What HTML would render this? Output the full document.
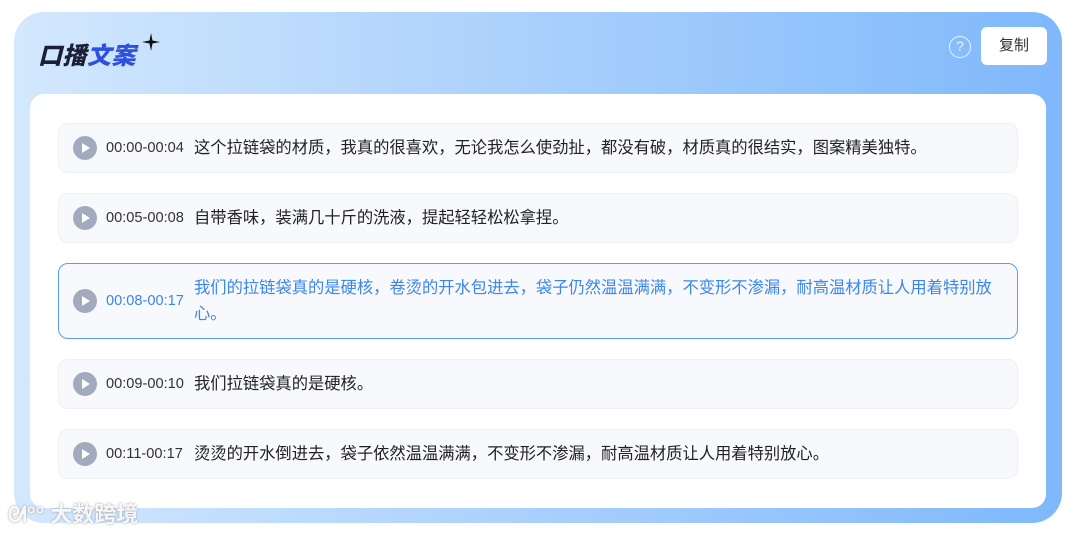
<!DOCTYPE html>
<html><head><meta charset="utf-8"><style>
*{margin:0;padding:0;box-sizing:border-box}
body{width:1080px;height:533px;background:#fff;font-family:"Liberation Sans","Noto Sans CJK SC",sans-serif;position:relative;overflow:hidden}
.outer{position:absolute;left:14px;top:12px;width:1048px;height:511px;border-radius:30px;background:linear-gradient(90deg,#d3e8fd 0%,#a9d0fc 50%,#7fb8fb 100%)}
.logo{position:absolute;left:38px;top:36px;font-size:24px;font-weight:900;font-style:italic;letter-spacing:0.5px;color:#2f4fe0}
.logo span{color:#1a1f36}
.star{position:absolute;left:142px;top:33px}
.help{position:absolute;left:949px;top:36px;width:22px;height:22px;border:1.5px solid #eaf3ff;border-radius:50%;color:#eaf3ff;font-size:14px;text-align:center;line-height:19px}
.copy{position:absolute;left:981px;top:27px;width:66px;height:38px;background:#fff;border-radius:6px;font-size:15px;color:#333;text-align:center;line-height:38px}
.panel{position:absolute;left:30px;top:94px;width:1016px;height:414px;background:#fff;border-radius:14px}
.row{position:absolute;left:58px;width:960px;background:#f8f9fc;border:1px solid #eef0f4;border-radius:10px;display:flex;align-items:center}
.play{position:absolute;left:14px;width:24px;height:24px;border-radius:50%;background:#a2aabd}
.play:after{content:"";position:absolute;left:9px;top:7px;border-left:8px solid #fff;border-top:5px solid transparent;border-bottom:5px solid transparent}
.t{position:absolute;left:47px;font-size:14.6px;color:#333}
.x{position:absolute;left:135px;right:12px;font-size:16.3px;color:#222;line-height:26px}
.act{border:1px solid #5b9bef;background:#f8f9fd}
.act .t,.act .x{color:#3a86ee}
.wm{position:absolute;left:8px;top:497px;font-size:22px;color:rgba(255,255,255,.9);text-shadow:0 0 2px #999;font-weight:bold}
</style></head><body>
<div class="outer"></div>
<div class="logo"><span>口播</span>文案</div>
<svg class="star" width="18" height="18" viewBox="0 0 18 18"><path d="M9 0 L10.5 7.5 L18 9 L10.5 10.5 L9 18 L7.5 10.5 L0 9 L7.5 7.5Z" fill="#111"/></svg>
<div class="help">?</div>
<div class="copy">复制</div>
<div class="panel"></div>
<div class="row" style="top:123px;height:50px"><div class="play"></div><div class="t">00:00-00:04</div><div class="x">这个拉链袋的材质，我真的很喜欢，无论我怎么使劲扯，都没有破，材质真的很结实，图案精美独特。</div></div>
<div class="row" style="top:193px;height:50px"><div class="play"></div><div class="t">00:05-00:08</div><div class="x">自带香味，装满几十斤的洗液，提起轻轻松松拿捏。</div></div>
<div class="row act" style="top:263px;height:76px"><div class="play"></div><div class="t">00:08-00:17</div><div class="x">我们的拉链袋真的是硬核，卷烫的开水包进去，袋子仍然温温满满，不变形不渗漏，耐高温材质让人用着特别放<br>心。</div></div>
<div class="row" style="top:359px;height:50px"><div class="play"></div><div class="t">00:09-00:10</div><div class="x">我们拉链袋真的是硬核。</div></div>
<div class="row" style="top:429px;height:50px"><div class="play"></div><div class="t">00:11-00:17</div><div class="x">烫烫的开水倒进去，袋子依然温温满满，不变形不渗漏，耐高温材质让人用着特别放心。</div></div>
<div class="wm">ᘛ°° 大数跨境</div>
</body></html>
